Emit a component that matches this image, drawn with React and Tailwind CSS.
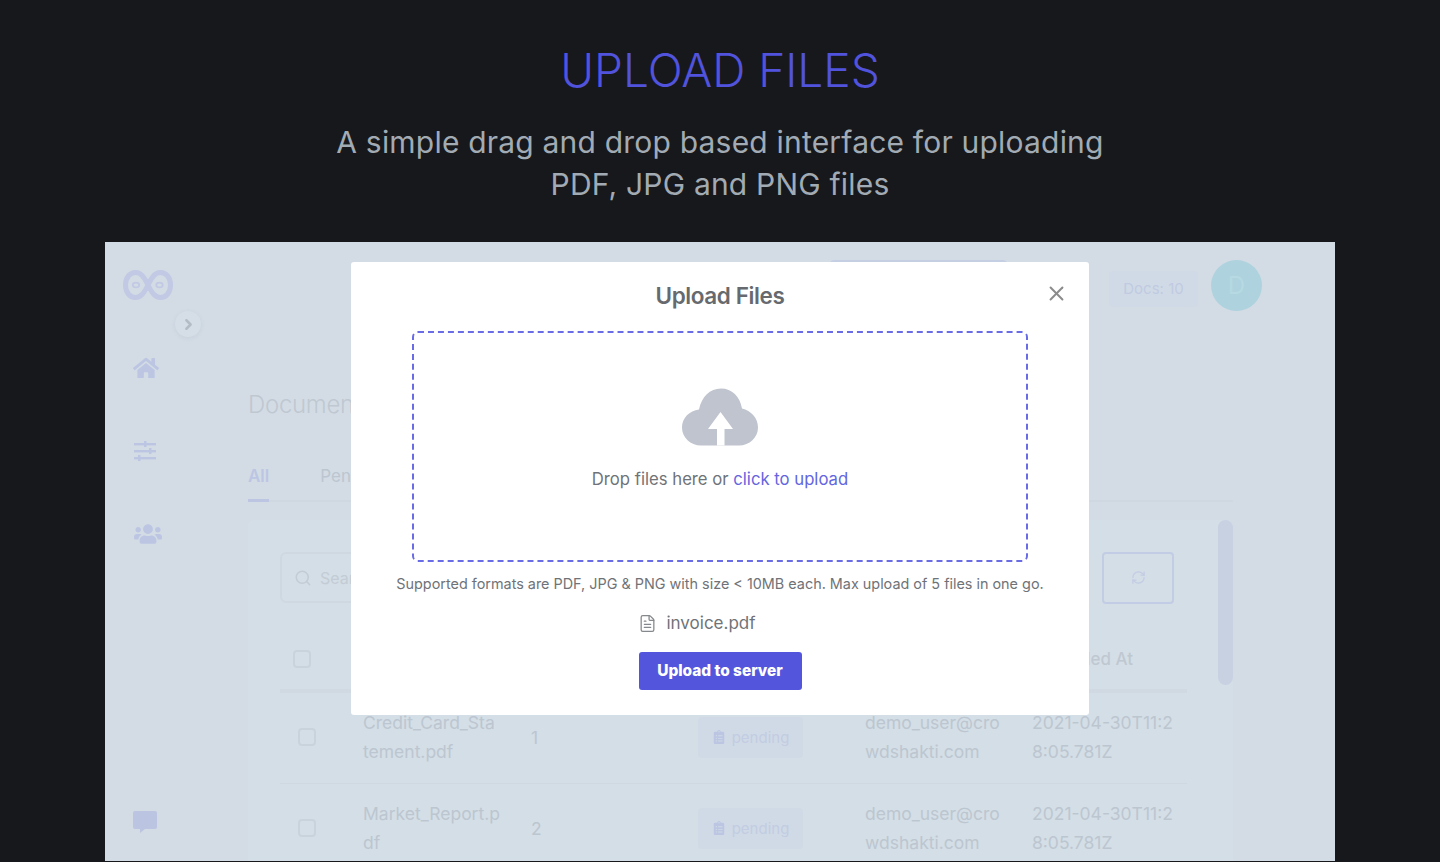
import { ChevronRight, FileText, RefreshCw, Search, X } from "lucide-react";
import { FaHome, FaUsers, FaClipboardList } from "react-icons/fa";

const rows = [
  { name: ["Credit_Card_Sta", "tement.pdf"], no: 1 },
  { name: ["Market_Report.p", "df"], no: 2 },
];

function Logo() {
  return (
    <svg width="50" height="30" viewBox="0 0 50 30" fill="none" stroke="#c1c9e4">
      <path strokeWidth="5" d="M25 15C21 7 18 2.500 12.500 2.500 6.500 2.500 2.500 8 2.500 15s4 12.500 10 12.500C18 27.500 21 23 25 15c4-8 7-12.500 12.500-12.500 6 0 10 5.500 10 12.500s-4 12.500-10 12.500C32 27.500 29 23 25 15Z" />
      <ellipse cx="13" cy="15" rx="3.200" ry="2.400" strokeWidth="1.800" />
      <ellipse cx="36.500" cy="15" rx="3.200" ry="2.400" strokeWidth="1.800" />
    </svg>
  );
}

function Sliders() {
  return (
    <svg width="24" height="20" viewBox="0 0 24 20" fill="#bcc6e3">
      <rect x="1" y="2" width="22" height="2.400" />
      <rect x="1" y="9" width="22" height="2.400" />
      <rect x="1" y="16" width="22" height="2.400" />
      <rect x="11" y="0" width="2.500" height="6" />
      <rect x="16" y="7" width="2.500" height="6" />
      <rect x="5" y="14" width="2.500" height="6" />
    </svg>
  );
}

function Chat() {
  return (
    <svg width="24" height="23" viewBox="0 0 24 23" fill="#bbc5e2">
      <path d="M2 1h20a2 2 0 0 1 2 2v14a2 2 0 0 1-2 2H12l-5 4v-4H2a2 2 0 0 1-2-2V3a2 2 0 0 1 2-2Z" />
    </svg>
  );
}

function Cloud() {
  return (
    <svg width="76" height="58" viewBox="0 0 76 58" className="shrink-0">
      <path fill="#bfc4ce" d="M19 57.500C8.500 57.500 0 49.500 0 39.500 0 30 7.500 22.500 17 21.500 19.500 9 28 0.500 39 0.500 50 0.500 58 8.500 60 20.500 69 22.500 76 30 76 39.500 76 49.500 67.500 57.500 57 57.500Z" />
      <path fill="#ffffff" d="M38.500 24 51 41H42.500V57.500H35V41H26Z" />
    </svg>
  );
}

function Background() {
  return (
    <div className="flex h-full bg-[#d3dce5] font-['Inter',sans-serif] text-[#bcc6d0]">
      <aside className="relative flex w-[78px] shrink-0 flex-col pl-[18px] pt-[28px]">
        <Logo />
        <div className="absolute left-[70px] top-[69px] flex h-[26px] w-[26px] items-center justify-center rounded-full bg-[#d5dee6] shadow-[0_1px_4px_rgba(150,165,180,0.2)]">
          <ChevronRight size={17} strokeWidth={3.5} className="text-[#b3bcc5]" />
        </div>
        <FaHome size={26} className="ml-[10px] mt-[55px] text-[#bcc6e3]" />
        <div className="ml-[10px] mt-[60px]"><Sliders /></div>
        <FaUsers size={28} className="ml-[11px] mt-[59px] text-[#bcc6e3]" />
        <div className="ml-[10px] mt-[262px]"><Chat /></div>
      </aside>

      <main className="min-w-0 flex-1 pl-[65px] pr-[102px]">
        <div className="flex h-[140px] items-start justify-end">
          <div className="mr-[102px] mt-[18px] h-[40px] w-[177px] rounded-t bg-[#c5cfe4]" />
          <div className="mr-[13px] mt-[29px] flex h-[36px] w-[89px] items-center justify-center rounded bg-[#d0dae6] text-[15px] text-[#c0cae2]">Docs: 10</div>
          <div className="mr-[-29px] mt-[18px] flex h-[51px] w-[51px] items-center justify-center rounded-full bg-[#aed3de] text-[24px] text-[#b6d9e3]">D</div>
        </div>
        <h1 className="pt-[1px] text-[24px] font-light leading-[43px] tracking-[-0.3px] text-[#bfc8d1]">Documents</h1>
        <div className="mt-[36px] flex h-[40px] gap-[51px] border-b-2 border-[#cfd8e1] text-[17px]">
          <span className="h-[40px] border-b-[3px] border-[#bcc5e2] pt-[2px] font-semibold text-[#bcc6e3]">All</span>
          <span className="pt-[2px]">Pending</span>
        </div>

        <div className="relative mt-[18px] h-[400px] rounded-t-md bg-[#d4dee6] pl-[32px]">
          <div className="flex items-start justify-between pr-[59px] pt-[32px]">
            <div className="flex h-[51px] w-[300px] items-center gap-[8px] rounded-md border-2 border-[#cfd8e1] pl-[12px] text-[16px] text-[#c3ccd5]">
              <Search size={18} className="text-[#c3ccd5]" />
              Search
            </div>
            <div className="flex h-[52px] w-[72px] items-center justify-center rounded border-2 border-[#c2cce4]">
              <RefreshCw size={15} className="-mt-[1px] text-[#c2cce4]" />
            </div>
          </div>
          <div className="absolute right-0 top-0 h-[165px] w-[15px] rounded-full bg-[#c8d1e2]" />

          <div className="mr-[46px] mt-[28px] flex h-[61px] items-start border-b-4 border-[#d0d9e2] pl-[13px] pt-[18px]">
            <span className="h-[18px] w-[18px] rounded-sm border-2 border-[#c9d3dc]" />
            <span className="ml-auto mr-[54px] -mt-[3px] text-[17px] font-medium text-[#bfc8d1]">Uploaded At</span>
          </div>
          {rows.map((r) => (
            <div key={r.no} className="mr-[46px] grid h-[91px] grid-cols-[83px_168px_167px_167px_167px_1fr] items-center border-b border-[#cfd8e1] pb-[2px] text-[17.500px] leading-[29px]">
              <span className="ml-[18px] h-[18px] w-[18px] rounded-sm border-2 border-[#c9d3dc]" />
              <span className="whitespace-nowrap">{r.name[0]}<br />{r.name[1]}</span>
              <span>{r.no}</span>
              <span className="flex h-[41px] w-[105px] items-center justify-center gap-[6px] rounded bg-[#d0dae6] text-[15px] text-[#c2cce2]">
                <FaClipboardList size={14} className="text-[#bcc6e3]" />
                pending
              </span>
              <span className="whitespace-nowrap">demo_user@cro<br />wdshakti.com</span>
              <span className="whitespace-nowrap">2021-04-30T11:2<br />8:05.781Z</span>
            </div>
          ))}
        </div>
      </main>
    </div>
  );
}

function UploadModal() {
  return (
    <div className="absolute left-[246px] top-[20px] h-[453px] w-[738px] rounded-[3px] bg-white font-['Inter',sans-serif]">
      <div className="flex h-[69px] items-center justify-center pb-[2px] text-[22.500px] font-semibold tracking-[-0.4px] text-[#666a6e]">Upload Files</div>
      <button className="absolute right-[23px] top-[22px] text-[#8b8b8b]">
        <X size={19} strokeWidth={2} className="scale-125" />
      </button>
      <div className="mx-auto flex h-[231px] w-[616px] flex-col items-center rounded-md border-2 border-dashed border-[#6a6ce6] pt-[55px]">
        <Cloud />
        <p className="mt-[20px] text-[16.700px] leading-[26px] text-[#6f7377]">
          Drop files here or <span className="text-[#6366e0]">click to upload</span>
        </p>
      </div>
      <p className="mt-[12px] text-center text-[14.400px] leading-[20px] text-[#6f7377]">
        Supported formats are PDF, JPG &amp; PNG with size &lt; 10MB each. Max upload of 5 files in one go.
      </p>
      <div className="mr-[46px] mt-[15px] flex items-center justify-center gap-[9px] text-[17px] leading-[28px] text-[#6f7377]">
        <FileText size={19} strokeWidth={1.600} className="text-[#85888c]" />
        invoice.pdf
      </div>
      <button className="mx-auto mt-[15px] block h-[38px] w-[163px] rounded-[3px] bg-[#5356dc] text-[15.400px] font-extrabold text-white">Upload to server</button>
    </div>
  );
}

export default function App() {
  return (
    <div className="h-[862px] overflow-hidden bg-[#16181c] font-['Inter',sans-serif]">
      <header className="flex h-[242px] flex-col items-center">
        <h2 className="mt-[42px] text-[46px] font-light leading-[56px] text-[#5153dc]">UPLOAD FILES</h2>
        <p className="mt-[23px] w-[800px] text-center text-[30px] leading-[42px] tracking-[0.2px] text-[#a2abb3]">
          A simple drag and drop based interface for uploading
          <br />
          PDF, JPG and PNG files
        </p>
      </header>
      <section className="relative mx-[105px] h-[619px] overflow-hidden">
        <Background />
        <UploadModal />
      </section>
    </div>
  );
}
